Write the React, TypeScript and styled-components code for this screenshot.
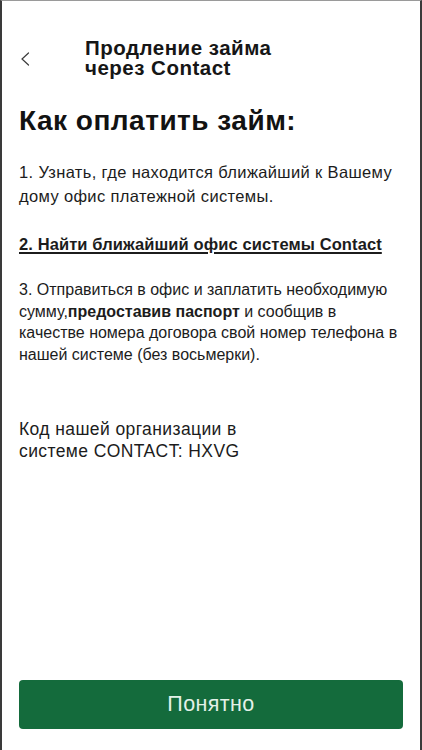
import styled, { createGlobalStyle } from 'styled-components';

const GlobalStyle = createGlobalStyle`
  html, body {
    margin: 0;
    padding: 0;
    background: #ffffff;
  }
  * {
    box-sizing: border-box;
  }
`;

const Screen = styled.div`
  width: 422px;
  height: 750px;
  display: flex;
  flex-direction: column;
  background: #ffffff;
  border-top: 1px solid #9a9a9a;
  border-left: 2px solid #3a3a3a;
  border-right: 2px solid #3a3a3a;
  font-family: 'Liberation Sans', Arial, sans-serif;
  color: #1c1c1c;
`;

const Header = styled.div`
  display: flex;
  align-items: center;
  padding: 37px 0 0 17px;
`;

const BackButton = styled.button`
  width: 12px;
  height: 16px;
  padding: 0;
  border: none;
  background: none;
  display: flex;
  align-items: center;
  justify-content: center;
  margin-right: 54px;
  margin-top: 2px;
`;

const HeaderTitle = styled.h1`
  margin: 0;
  font-size: 20.5px;
  line-height: 20px;
  font-weight: 700;
  letter-spacing: 0.5px;
  color: #161616;
`;

const Content = styled.div`
  flex: 1;
  display: flex;
  flex-direction: column;
  padding: 26px 17px 0 17px;
`;

const Heading = styled.h2`
  margin: 0 0 22px;
  font-size: 28px;
  line-height: 34px;
  font-weight: 700;
  letter-spacing: 0.5px;
  color: #121212;
`;

const Step = styled.p`
  margin: 0 0 25px;
  font-size: 16.5px;
  line-height: 24px;
  letter-spacing: 0.35px;
`;

const LinkStep = styled.a`
  display: block;
  margin: 0 0 24px;
  font-size: 16.5px;
  line-height: 22px;
  font-weight: 700;
  letter-spacing: 0.1px;
  color: #1c1c1c;
  text-decoration: underline;
  text-decoration-thickness: 1.5px;
  text-underline-offset: 2px;
`;

const SmallStep = styled.p`
  margin: 0 0 53px;
  font-size: 16px;
  line-height: 21.5px;

  b {
    font-weight: 700;
  }
`;

const Code = styled.p`
  margin: 0;
  font-size: 17.5px;
  line-height: 22px;
  letter-spacing: 0.4px;
`;

const Footer = styled.div`
  padding: 0 17px 21px;
`;

const PrimaryButton = styled.button`
  width: 100%;
  height: 49px;
  border: none;
  border-radius: 4px;
  background: #146b3c;
  color: #e3f1e8;
  font-family: 'Liberation Sans', Arial, sans-serif;
  font-size: 21.5px;
  letter-spacing: 0.4px;
`;

export default function App() {
  return (
    <>
      <GlobalStyle />
      <Screen>
        <Header>
          <BackButton aria-label="Назад">
            <svg width="10" height="14" viewBox="0 0 10 14" fill="none">
              <path d="M8.5 1L2 7l6.5 6" stroke="#3a3a3a" strokeWidth="1.2" strokeLinecap="round" />
            </svg>
          </BackButton>
          <HeaderTitle>
            Продление займа
            <br />
            через Contact
          </HeaderTitle>
        </Header>
        <Content>
          <Heading>Как оплатить займ:</Heading>
          <Step>1. Узнать, где находится ближайший к Вашему дому офис платежной системы.</Step>
          <LinkStep href="#">2. Найти ближайший офис системы Contact</LinkStep>
          <SmallStep>
            3. Отправиться в офис и заплатить необходимую сумму,<b>предоставив паспорт</b> и
            сообщив в качестве номера договора свой номер телефона в нашей системе (без
            восьмерки).
          </SmallStep>
          <Code>
            Код нашей организации в
            <br />
            системе CONTACT: HXVG
          </Code>
        </Content>
        <Footer>
          <PrimaryButton>Понятно</PrimaryButton>
        </Footer>
      </Screen>
    </>
  );
}
